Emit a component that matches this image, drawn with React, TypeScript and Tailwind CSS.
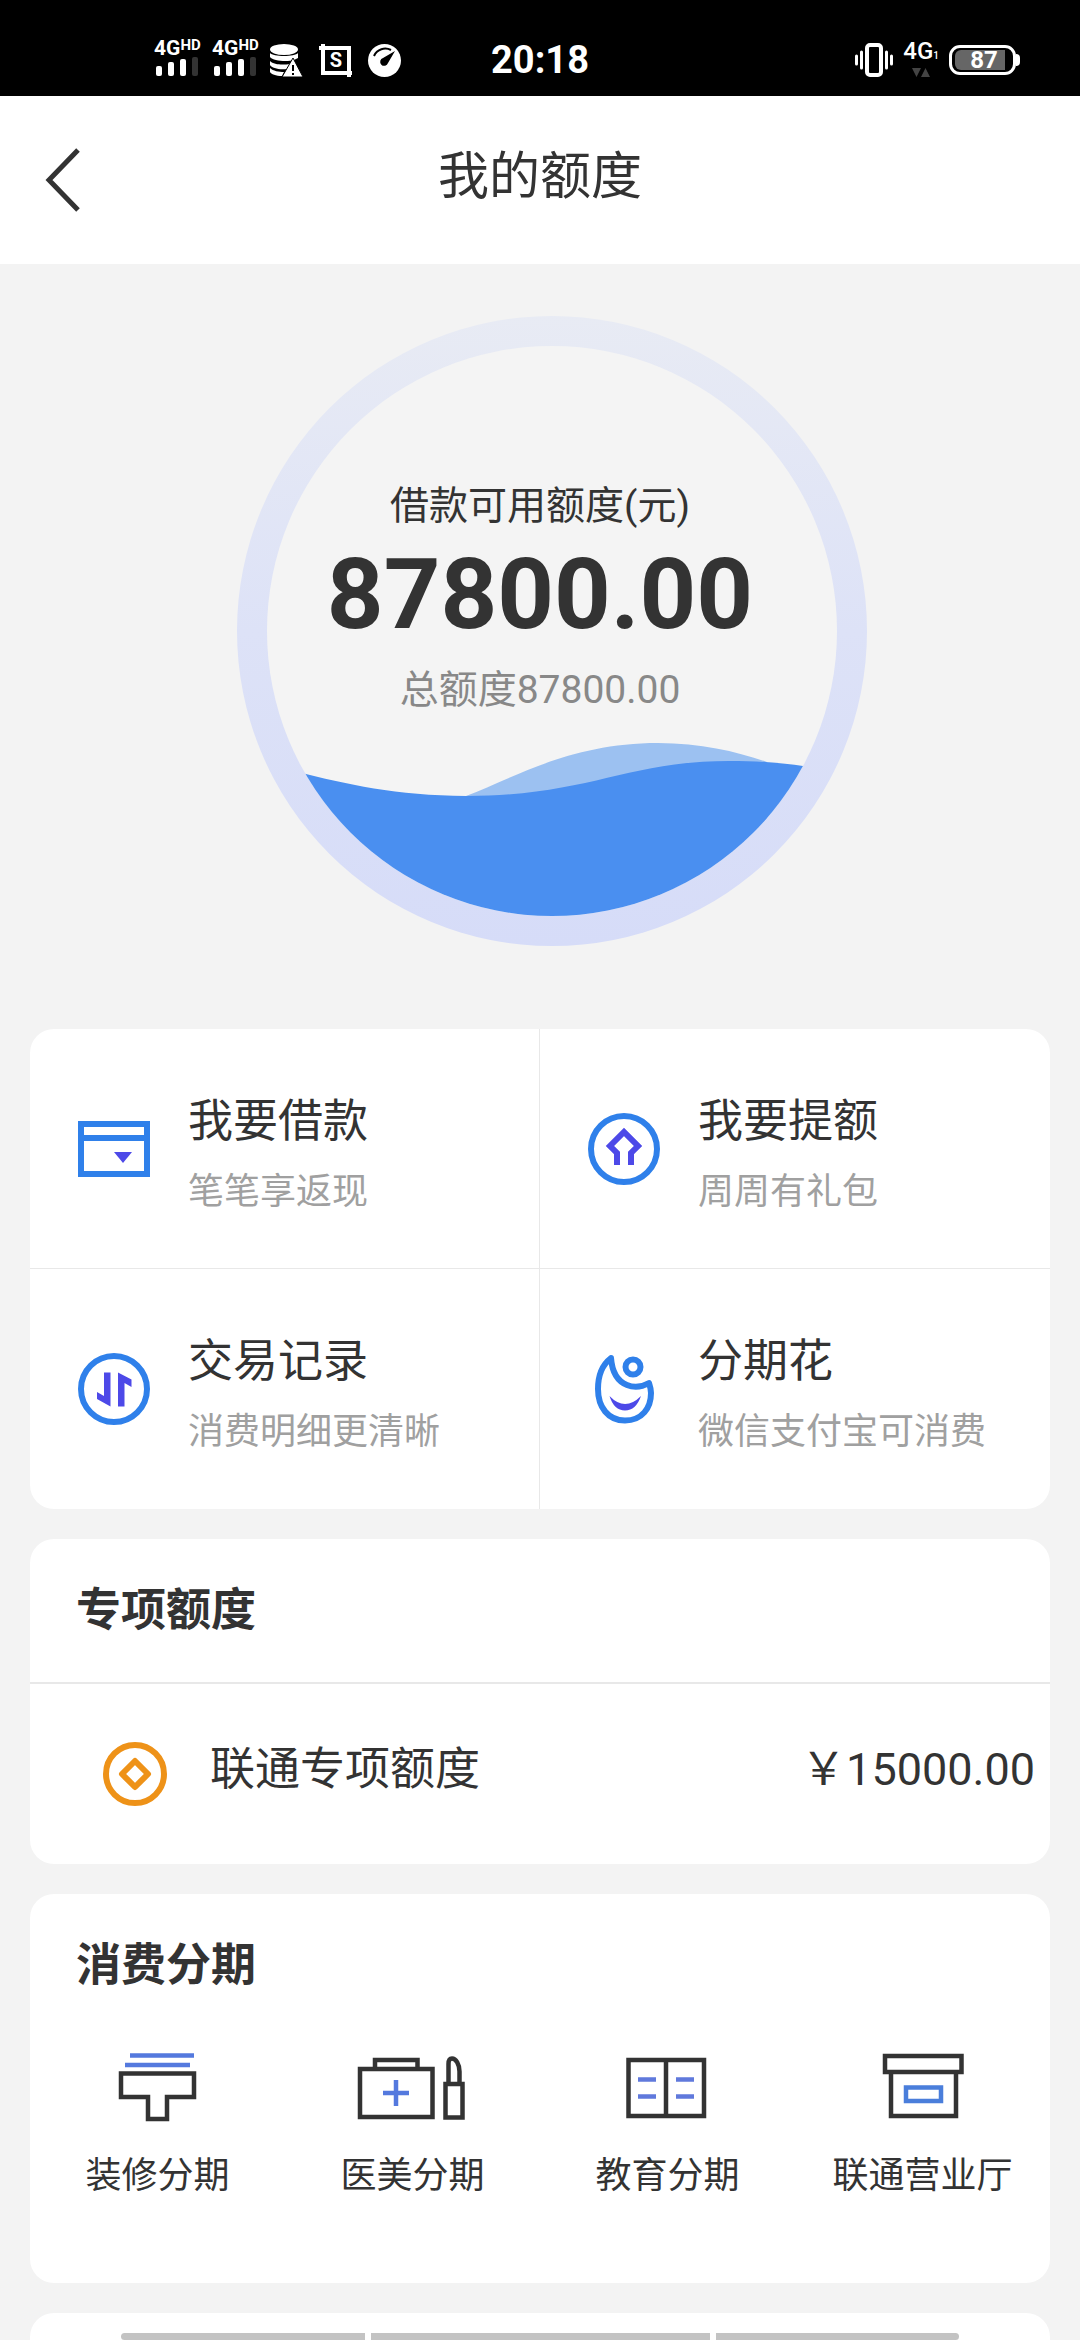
import type { ReactNode } from "react";

export default function App() {
  return (
    <div className="flex min-h-screen flex-col bg-[#f3f3f3] font-[Roboto,'Noto_Sans_CJK_SC',sans-serif] text-[#333]">
      <StatusBar />

      {/* Header */}
      <header className="grid h-[168px] grid-cols-[1fr_auto_1fr] items-center bg-white">
        <button aria-label="返回" className="w-fit pl-11">
          <svg width="40" height="68" viewBox="0 0 40 68" fill="none">
            <path d="M34 4 5 34l29 30" stroke="#333" strokeWidth="5" />
          </svg>
        </button>
        <h1 className="pb-1.5 text-[51px] leading-[72px]">我的额度</h1>
      </header>

      <main className="flex flex-1 flex-col">
        <QuotaGauge />

        <div className="flex flex-1 flex-col gap-[30px] px-[30px]">
          {/* Shortcuts */}
          <section className="grid grid-cols-2 overflow-hidden rounded-3xl bg-white">
            {shortcuts.map((s) => (
              <button
                key={s.title}
                className="flex h-60 items-center gap-[38px] border-[#e8e8e8] pl-12 text-left odd:border-r nth-[-n+2]:border-b"
              >
                <svg width="72" height="72" viewBox="0 0 72 72" fill="none" className="shrink-0">
                  {s.icon}
                </svg>
                <span className="flex flex-col gap-3 pt-2.5">
                  <span className="text-[45px] leading-[64px]">{s.title}</span>
                  <span className="text-[36px] leading-[52px] text-[#a0a0a0]">{s.note}</span>
                </span>
              </button>
            ))}
          </section>

          {/* Special quota */}
          <section className="rounded-3xl bg-white">
            <CardTitle>专项额度</CardTitle>
            <div className="flex h-[182px] items-center border-t-2 border-[#e8e8e8] pr-[15px] pl-[73px] text-[45px] leading-[64px]">
              <CoinIcon />
              <span className="flex-1 pb-2 pl-[43px]">联通专项额度</span>
              <span className="pb-2">￥15000.00</span>
            </div>
          </section>

          {/* Installments */}
          <section className="rounded-3xl bg-white pb-20">
            <CardTitle>消费分期</CardTitle>
            <div className="grid grid-cols-4 pt-2">
              {installments.map((item) => (
                <button key={item.label} className="flex flex-col items-center gap-6">
                  <svg width="120" height="80" viewBox="0 0 120 80" fill="none" stroke="#333" strokeWidth="4.500">
                    {item.icon}
                  </svg>
                  <span className="text-[36px] leading-[54px]">{item.label}</span>
                </button>
              ))}
            </div>
          </section>

          {/* Next card, with the system gesture bars at its foot */}
          <section className="grid flex-1 grid-cols-[244fr_338fr_243fr] items-end gap-1.5 rounded-t-3xl bg-white px-[91px]">
            <span className="h-[7px] rounded-l-sm bg-[#c3c3c3]" />
            <span className="h-[7px] bg-[#c3c3c3]" />
            <span className="h-[7px] rounded-r-sm bg-[#c3c3c3]" />
          </section>
        </div>
      </main>
    </div>
  );
}

/* ----------------------------- Components ----------------------------- */

function CardTitle({ children }: { children: ReactNode }) {
  return (
    <h2 className="flex h-[143px] items-center pl-[46px] text-[45px] leading-[64px] font-bold">{children}</h2>
  );
}

function QuotaGauge() {
  return (
    <section className="grid justify-items-center pt-[52px] pb-[83px]">
      <svg width="630" height="630" viewBox="0 0 630 630" className="col-start-1 row-start-1 ml-6">
        <defs>
          <linearGradient id="ring" x1="0" y1="0" x2="0" y2="1">
            <stop offset="0" stopColor="#e8ebf4" />
            <stop offset="0.5" stopColor="#dde2f7" />
            <stop offset="1" stopColor="#d6dcf8" />
          </linearGradient>
          <clipPath id="inner">
            <circle cx="315" cy="315" r="285" />
          </clipPath>
        </defs>
        <circle cx="315" cy="315" r="315" fill="url(#ring)" />
        <circle cx="315" cy="315" r="285" fill="#f4f4f4" />
        <g clipPath="url(#inner)">
          <path d="M229 480c46-17 103-53 192-53 44 0 80 9 109 19v60H229Z" fill="#9cc1f1" />
          <path
            d="M20 446C80 460 140 480 229 480c121 0 161-35 263-35 30 0 55 2 74 5l60 10v170H20Z"
            fill="#4a8ff0"
          />
        </g>
      </svg>
      <div className="z-10 col-start-1 row-start-1 flex flex-col items-center pt-[162px]">
        <div className="text-[39px] leading-[56px]">借款可用额度(元)</div>
        <div className="text-[99px] leading-[120px] font-bold">87800.00</div>
        <div className="pt-2 text-[39px] leading-[56px] text-[#888]">总额度87800.00</div>
      </div>
    </section>
  );
}

function CoinIcon() {
  return (
    <svg width="64" height="64" viewBox="0 0 64 64" fill="none" stroke="#ee9218" strokeWidth="6">
      <circle cx="32" cy="32" r="29" />
      <path d="M32 19 45 32 32 45 19 32Z" strokeWidth="6" strokeLinejoin="round" />
    </svg>
  );
}

function StatusBar() {
  return (
    <div className="grid h-24 grid-cols-[1fr_auto_1fr] items-center bg-black pt-6 text-white">
      <div className="flex items-center gap-4 pl-[154px]">
        <div className="flex items-center gap-3">
          <Signal />
          <Signal />
          {/* data warning */}
          <svg width="33" height="33" viewBox="0 0 33 33">
            <ellipse cx="14" cy="5.5" rx="14" ry="5.5" fill="#fff" />
            <path
              d="M0 9c3 4 25 4 28 0v5l-4 2c-7 2-21 1-24-3ZM0 17c4 4 13 4 20 3l-3 5C9 26 2 24 0 21ZM0 24c3 3 9 4 14 4l-2 4C6 32 1 30 0 28Z"
              fill="#fff"
            />
            <path d="M23 14 33 33H12Z" fill="#fff" stroke="#000" strokeWidth="1" />
            <path d="M23 21v6M23 29v2" stroke="#000" strokeWidth="2" />
          </svg>
        </div>
        {/* screenshot */}
        <svg width="33" height="33" viewBox="0 0 33 33">
          <path d="M0 4h30v29M4 0v29h29" fill="none" stroke="#fff" strokeWidth="4" />
          <text x="17" y="23" textAnchor="middle" fill="#fff" fontSize="20" fontWeight="700">
            S
          </text>
        </svg>
        {/* speed gauge */}
        <svg width="33" height="33" viewBox="0 0 33 33">
          <circle cx="16.5" cy="16.5" r="16.5" fill="#fff" />
          <path d="M6 12C9 5 17 3 23 6" fill="none" stroke="#000" strokeWidth="2" />
          <path d="M27 7 20 19a4 4 0 1 1-5-5Z" fill="#000" />
        </svg>
      </div>

      <div className="text-[38px] leading-[44px] font-bold">20:18</div>

      <div className="flex items-center justify-end gap-2.5 pr-[60px]">
        {/* vibrate */}
        <svg width="38" height="34" viewBox="0 0 38 34" fill="none" stroke="#fff" strokeLinecap="round">
          <rect x="12" y="2" width="14" height="30" rx="3" strokeWidth="4" />
          <path d="M6.500 9v16M31.500 9v16M1.500 13v8M36.500 13v8" strokeWidth="3" />
        </svg>
        <div className="flex flex-col items-center pb-1">
          <div className="text-[24px] leading-[24px] font-medium">
            4G<span className="text-[10px]">1</span>
          </div>
          <svg width="18" height="9" viewBox="0 0 18 9" fill="#444">
            <path d="M0 0h9L4.500 9ZM9 9h9L13.500 0Z" />
          </svg>
        </div>
        <div className="flex items-center">
          <div className="flex h-[30px] w-[67px] items-center rounded-[11px] border-[3px] border-white px-[3px]">
            <div className="h-5 w-[50px] rounded-l-md bg-[#666] text-center text-[24px] leading-5 font-bold">
              <span className="pl-2">87</span>
            </div>
          </div>
          <div className="h-3 w-[4px] rounded-r-md bg-white" />
        </div>
      </div>
    </div>
  );
}

function Signal() {
  return (
    <div className="flex w-[46px] flex-col pb-1">
      <div className="flex items-start text-[21px] leading-[16px] font-bold">
        4G<span className="text-[15px] leading-[11px]">HD</span>
      </div>
      <svg width="46" height="20" viewBox="0 0 46 20" fill="#fff">
        <rect x="2" y="10" width="6" height="10" rx="2" />
        <rect x="14" y="6" width="6" height="14" rx="2" />
        <rect x="26" y="3" width="6" height="17" rx="2" />
        <rect x="38" y="1" width="6" height="19" rx="2" fill="#333" />
      </svg>
    </div>
  );
}

/* -------------------------------- Data -------------------------------- */

const shortcuts: { title: string; note: string; icon: ReactNode }[] = [
  {
    title: "我要借款",
    note: "笔笔享返现",
    icon: (
      <>
        <path d="M3 11h66v50H3ZM3 25h66" stroke="#2f80ea" strokeWidth="6" />
        <path d="M36 39h18L45 50Z" fill="#4d49e8" />
      </>
    ),
  },
  {
    title: "我要提额",
    note: "周周有礼包",
    icon: (
      <>
        <circle cx="36" cy="36" r="33" stroke="#2f80ea" strokeWidth="6" />
        <path d="M29 52V40l-7-7 14-14 14 14-7 7v12" stroke="#4d49e8" strokeWidth="6" />
      </>
    ),
  },
  {
    title: "交易记录",
    note: "消费明细更清晰",
    icon: (
      <>
        <circle cx="36" cy="36" r="33" stroke="#2f80ea" strokeWidth="6" />
        <path
          d="M26 19.500h6.500v34L19 46v-7l7 4ZM40 19.500l13.500 7V34L46.500 30v23.500H40Z"
          fill="#4d49e8"
        />
      </>
    ),
  },
  {
    title: "分期花",
    note: "微信支付宝可消费",
    icon: (
      <>
        <path
          d="M23 5C14 12 10 24 10 36c0 18 10 31.500 27 31.500S63 55 63 40c0-3-1-7-2-10-7 4-15 5-22 2C29 28 24 18 23 5Z"
          stroke="#2f80ea"
          strokeWidth="6"
          strokeLinejoin="round"
        />
        <circle cx="45" cy="14" r="7.500" stroke="#2f80ea" strokeWidth="6" />
        <path d="M21.500 43Q37 59 53 43Q48 57.500 37 57.500T21.500 43Z" fill="#4d49e8" />
      </>
    ),
  },
];

const installments: { label: string; icon: ReactNode }[] = [
  {
    label: "装修分期",
    icon: (
      <>
        <path d="M32 10.500h64M27 20h65" stroke="#5479de" />
        <path d="M23 28.500h73V52H69v22H50V52H23Z" />
      </>
    ),
  },
  {
    label: "医美分期",
    icon: (
      <>
        <path d="M7 24h72.500v48H7ZM22 24v-9h42.500v9" />
        <path d="M43 35v26M30 48h26" stroke="#5479de" />
        <path d="M92.500 39h17v33.500h-17ZM95.500 38V19c0-4 1.500-5.500 3.500-5.500 4 0 7.500 6 7.500 13V38" />
      </>
    ),
  },
  {
    label: "教育分期",
    icon: (
      <>
        <path d="M20.500 15H96v56H20.500ZM58 15v56" />
        <path d="M30 34.500h18M68 34.500h18M30 51.500h18M68 51.500h18" stroke="#6079dc" />
      </>
    ),
  },
  {
    label: "联通营业厅",
    icon: (
      <>
        <path d="M22 11h76.500v16H22ZM28 27v44h65V27" />
        <path d="M43 42.500h35v13.500H43Z" stroke="#4a7edb" />
      </>
    ),
  },
];
